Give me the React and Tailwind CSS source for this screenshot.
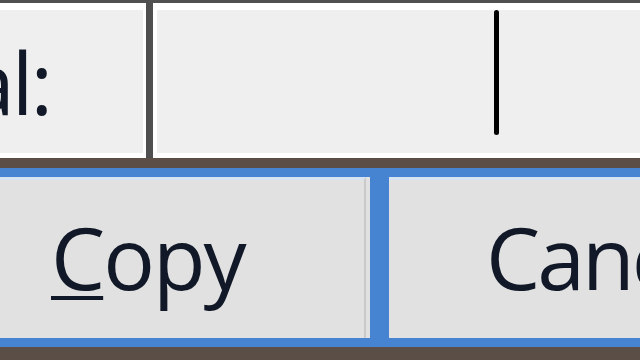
export default function App() {
  const font = { fontFamily: '"Open Sans", "Noto Sans", sans-serif' };
  return (
    <div className="w-[640px] h-[360px] overflow-hidden flex flex-col bg-[#5a4e46]" style={font}>
      <div className="h-[3px] bg-[#505050]" />
      <div className="h-[155px] flex">
        <div className="w-[146px] shrink-0 border-t-[7px] border-b-[5px] border-r-[3px] border-white bg-[#efefef] overflow-hidden flex">
          <div className="w-[50px] shrink-0 flex justify-end pt-[29px]">
            <span className="text-[86px] font-medium tracking-[-3px] leading-none whitespace-nowrap text-[#111827]">Total:</span>
          </div>
        </div>
        <div className="w-[7px] shrink-0 bg-[#4f4f4f]" />
        <div className="flex-1 border-t-[7px] border-b-[5px] border-l-[4px] border-white bg-[#efefef] flex">
          <div className="ml-[337px] w-[5px] h-[125px] rounded-full bg-black" />
        </div>
      </div>
      <div className="h-[10px] bg-[#5a4e46]" />
      <div className="h-[179px] flex border-t-[9px] border-b-[9px] border-[#4683d0] bg-[#e1e1e1]">
        <div className="w-[366px] shrink-0 border-t-[3px] border-[#d6e3f2] border-r-[2px] border-r-[#c9c9c9] pl-[51px] pt-[34px]">
          <span className="text-[86px] font-medium tracking-[-2px] leading-none text-[#111827]">
            <span className="underline decoration-[4px] underline-offset-[6px]">C</span>opy
          </span>
        </div>
        <div className="w-[4px] shrink-0" />
        <div className="w-[19px] shrink-0 bg-[#4683d0]" />
        <div className="flex-1 border-t-[3px] border-[#d6e3f2] pl-[97px] pt-[34px]">
          <span className="text-[86px] font-medium tracking-[-3px] leading-none whitespace-nowrap text-[#111827]">Cancel</span>
        </div>
      </div>
      <div className="flex-1 bg-[#5a4e46]" />
    </div>
  );
}
